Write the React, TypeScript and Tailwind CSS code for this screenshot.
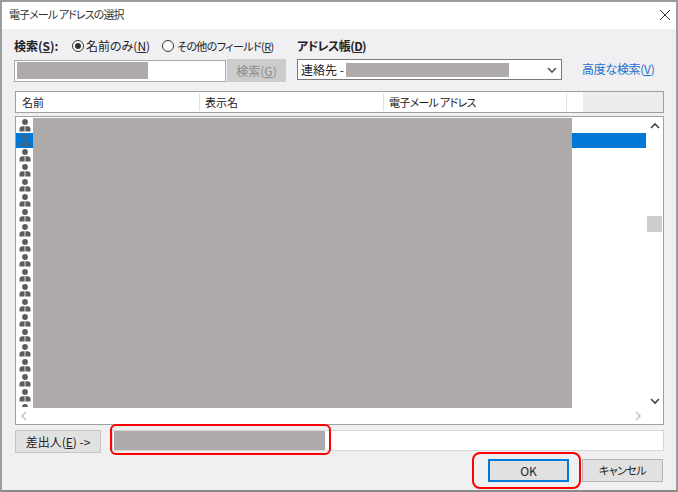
const font = { fontFamily: '"Noto Sans CJK JP", "Noto Sans", sans-serif' }

function PersonIcon({ faded }: { faded?: boolean }) {
  return (
    <svg width="14" height="15" viewBox="0 0 14 15" className={faded ? 'opacity-60' : ''}>
      <circle cx="7" cy="4" r="2.9" fill="#5c5c5c" />
      <path d="M1.5 13.5 V11 Q1.5 8.2 4.5 8.2 H6.6 V13.5 Z M7.4 13.5 V8.2 H9.5 Q12.5 8.2 12.5 11 V13.5 Z" fill="#5c5c5c" />
    </svg>
  )
}

function Chevron({ d, color = '#444' }: { d: string; color?: string }) {
  return (
    <svg width="10" height="10" viewBox="0 0 10 10" fill="none" stroke={color} strokeWidth="1.6">
      <path d={d} />
    </svg>
  )
}

const rows = Array.from({ length: 20 }, (_, i) => i)

export default function App() {
  return (
    <div
      style={font}
      className="relative flex h-[492px] w-[678px] flex-col overflow-hidden border-2 border-[#9c9c9c] border-b-[#8a8a8a] bg-[#f0eff2] text-[12px] leading-none text-[#222] [font-feature-settings:'palt']"
    >
      {/* title bar */}
      <div className="flex h-[27px] shrink-0 items-center justify-between bg-white pb-[2px] pl-[7px] pr-[5px]">
        <span className="whitespace-nowrap text-[11px] tracking-[-0.9px] text-[#333]">電子メール アドレスの選択</span>
        <svg width="12" height="12" viewBox="0 0 12 12" stroke="#333" strokeWidth="1">
          <path d="M1 1 L11 11 M11 1 L1 11" />
        </svg>
      </div>

      <div className="flex flex-1 flex-col pl-[13px] pr-[12px]">
        {/* search row */}
        <div className="mt-[9px] flex">
          <div className="-ml-[1px] w-[272px] shrink-0">
            <div className="flex h-[16px] items-center whitespace-nowrap">
              <span className="w-[58px] shrink-0 font-bold">
                検索(<u>S</u>):
              </span>
              <span className="flex h-[12px] w-[12px] shrink-0 items-center justify-center rounded-full border border-[#333] bg-white">
                <span className="h-[6px] w-[6px] rounded-full bg-[#333]" />
              </span>
              <span className="ml-[2px] w-[76px] shrink-0">
                名前のみ(<u>N</u>)
              </span>
              <span className="h-[12px] w-[12px] shrink-0 rounded-full border border-[#333] bg-white" />
              <span className="ml-[3px] text-[11px] tracking-[-0.6px]">
                その他のフィールド(<u>R</u>)
              </span>
            </div>
            <div className="mt-[5px] flex items-center">
              <div className="flex h-[22px] w-[212px] items-center border border-[#a8a8a8] bg-white pl-[2px]">
                <div className="h-[17px] w-[131px] bg-[#aeaaaa]" />
              </div>
              <button className="ml-[1px] h-[23px] w-[59px] bg-[#cccccc] text-[12px] text-[#8a8a8a]">
                検索(<u>G</u>)
              </button>
            </div>
          </div>

          <div className="ml-[11px] w-[265px] shrink-0">
            <div className="flex h-[16px] items-center whitespace-nowrap font-bold tracking-[-0.6px]">
              アドレス帳(<u>D</u>)
            </div>
            <div className="mt-[5px] flex h-[21px] items-center justify-between border border-[#7a7a7a] bg-white pl-[3px] pr-[4px]">
              <div className="flex items-center">
                <span>連絡先 -</span>
                <div className="ml-[2px] h-[14px] w-[163px] bg-[#aeaaaa]" />
              </div>
              <Chevron d="M1 3 L5 7 L9 3" color="#555" />
            </div>
          </div>

          <a className="ml-[20px] mt-[25px] whitespace-nowrap tracking-[-0.3px] text-[#1f6fc9]">
            高度な検索(<u>V</u>)
          </a>
        </div>

        {/* column headers */}
        <div className="mt-[9px] flex h-[22px] w-[649px] shrink-0 items-stretch border border-[#a0a0a0] bg-white text-[11px]">
          <div className="flex w-[183px] items-center pl-[6px]">名前</div>
          <div className="my-[1px] w-px bg-[#e0e0e0]" />
          <div className="flex w-[183px] items-center pl-[5px]">表示名</div>
          <div className="my-[1px] w-px bg-[#e0e0e0]" />
          <div className="flex w-[182px] items-center whitespace-nowrap pl-[5px] tracking-[-0.7px]">電子メール アドレス</div>
          <div className="my-[1px] w-px bg-[#e0e0e0]" />
          <div className="w-[16px]" />
          <div className="flex-1 bg-[#ececec]" />
        </div>

        {/* contact list */}
        <div className="relative mt-[3px] flex h-[309px] w-[649px] shrink-0 flex-col border border-[#a0a0a0] bg-white">
          <div className="flex min-h-0 flex-1">
            <div className="h-[290px] flex-1 overflow-hidden pt-[1px]">
              {rows.map((i) => (
                <div key={i} className={`flex h-[15px] items-center ${i === 1 ? 'bg-[#0078d7]' : ''}`}>
                  <div className="flex w-[17px] justify-center">
                    <PersonIcon faded={i === 1} />
                  </div>
                </div>
              ))}
            </div>
            <div className="flex w-[17px] flex-col items-center justify-between pb-[1px] pt-[4px]">
              <Chevron d="M1 7 L5 3 L9 7" />
              <Chevron d="M1 3 L5 7 L9 3" />
            </div>
          </div>
          <div className="flex h-[17px] items-center justify-between pl-[3px] pr-[20px]">
            <Chevron d="M7 1 L3 5 L7 9" color="#c4c4c4" />
            <Chevron d="M3 1 L7 5 L3 9" color="#c4c4c4" />
          </div>

          {/* redaction and scrollbar thumb */}
          <div className="absolute left-[17px] top-[1px] h-[290px] w-[539px] bg-[#aeaaaa]" />
          <div className="absolute right-[1px] top-[99px] h-[16px] w-[15px] bg-[#cdcdcd]" />
        </div>

        {/* sender row */}
        <div className="mt-[5px] flex items-start">
          <button className="h-[23px] w-[86px] border border-[#c4c4c4] bg-[#e1e1e1] text-[12px]">
            差出人(<u>E</u>) -&gt;
          </button>
          <div className="ml-[11px] flex h-[21px] w-[552px] items-center border border-[#d8d8d8] bg-white pl-[1px]">
            <div className="h-[19px] w-[211px] bg-[#aeaaaa]" />
          </div>
        </div>

        {/* dialog buttons */}
        <div className="mt-[6px] flex justify-end gap-[13px] pr-[1px]">
          <button className="h-[23px] w-[81px] border-2 border-[#0078d7] bg-[#e1e1e1]">OK</button>
          <button className="h-[23px] w-[81px] border border-[#b4b4b4] bg-[#e1e1e1] text-[11px] tracking-[-0.5px]">キャンセル</button>
        </div>
      </div>

      {/* red callouts */}
      <div className="absolute left-[108px] top-[422px] h-[31px] w-[221px] rounded-[6px] border-2 border-[#ff0000]" />
      <div className="absolute left-[470px] top-[450px] h-[37px] w-[109px] rounded-[8px] border-2 border-[#ff0000]" />
    </div>
  )
}
